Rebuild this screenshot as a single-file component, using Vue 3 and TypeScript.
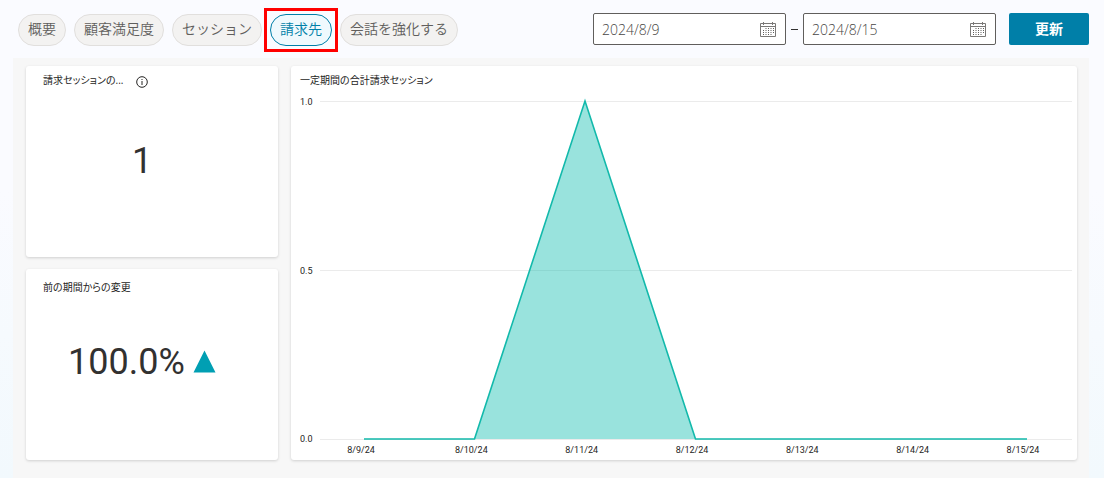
<script setup lang="ts">
import { computed, ref } from 'vue'

interface Tab {
  id: string
  label: string
}

interface Point {
  date: string
  value: number
}

const tabs: Tab[] = [
  { id: 'summary', label: '概要' },
  { id: 'csat', label: '顧客満足度' },
  { id: 'sessions', label: 'セッション' },
  { id: 'billing', label: '請求先' },
  { id: 'boost', label: '会話を強化する' },
]

const activeTab = ref('billing')
const startDate = ref('2024/8/9')
const endDate = ref('2024/8/15')

const points: Point[] = [
  { date: '8/9/24', value: 0 },
  { date: '8/10/24', value: 0 },
  { date: '8/11/24', value: 1 },
  { date: '8/12/24', value: 0 },
  { date: '8/13/24', value: 0 },
  { date: '8/14/24', value: 0 },
  { date: '8/15/24', value: 0 },
]

const yTicks = ['1.0', '0.5', '0.0']

const line = computed(() =>
  points.map((p, i) => `${(i * 600) / (points.length - 1)},${(1 - p.value) * 100}`).join(' '),
)
const area = computed(() => `0,100 ${line.value} 600,100`)

const dots: { x: number; y: number }[] = []
for (let row = 0; row < 4; row++) {
  for (let col = 0; col < 5; col++) {
    if ((row === 0 && col === 0) || (row === 3 && col === 4)) continue
    dots.push({ x: 3 + col * 2.5, y: 6 + row * 2 })
  }
}
</script>

<template>
  <div class="page">
    <header class="toolbar">
      <nav class="tabs" aria-label="レポート">
        <button
          v-for="tab in tabs"
          :key="tab.id"
          type="button"
          class="tab"
          :class="{ active: tab.id === activeTab }"
          :aria-pressed="tab.id === activeTab"
          @click="activeTab = tab.id"
        >
          {{ tab.label }}
        </button>
      </nav>

      <form class="range" @submit.prevent>
        <div class="date">
          <input v-model="startDate" type="text" aria-label="開始日" />
          <button type="button" class="picker" aria-label="開始日を選択">
            <svg width="16" height="15" viewBox="0 0 16 15" fill="none" stroke="#7a7876">
              <path d="M0.5 1.5h15v13h-15zM0.5 4.5h15M3.5 0v3M12.5 0v3" />
              <rect v-for="(d, i) in dots" :key="i" :x="d.x" :y="d.y" width="1" height="1" fill="#605e5c" stroke="none" />
            </svg>
          </button>
        </div>
        <span class="dash" aria-hidden="true"></span>
        <div class="date">
          <input v-model="endDate" type="text" aria-label="終了日" />
          <button type="button" class="picker" aria-label="終了日を選択">
            <svg width="16" height="15" viewBox="0 0 16 15" fill="none" stroke="#7a7876">
              <path d="M0.5 1.5h15v13h-15zM0.5 4.5h15M3.5 0v3M12.5 0v3" />
              <rect v-for="(d, i) in dots" :key="i" :x="d.x" :y="d.y" width="1" height="1" fill="#605e5c" stroke="none" />
            </svg>
          </button>
        </div>
        <button type="submit" class="update">更新</button>
      </form>
    </header>

    <main class="board">
      <section class="card kpi total">
        <h2 class="title">
          請求セッションの...
          <svg class="info" width="12" height="12" viewBox="0 0 12 12" fill="none" stroke="#252423">
            <circle cx="6" cy="6" r="5.3" />
            <path d="M6 5v4M6 3v1" />
          </svg>
        </h2>
        <p class="value">1</p>
      </section>

      <section class="card kpi change">
        <h2 class="title">前の期間からの変更</h2>
        <p class="value">
          100.0%
          <svg width="23" height="23" viewBox="0 0 23 23"><path d="M11.5 0.5L22.5 22.5H0.5z" fill="#009fb3" /></svg>
        </p>
      </section>

      <section class="card chart">
        <h2 class="title">一定期間の合計請求セッション</h2>
        <div class="graph">
          <div class="y-axis">
            <span v-for="t in yTicks" :key="t">{{ t }}</span>
          </div>
          <div class="plot">
            <div class="grid-lines"><i></i><i></i><i></i></div>
            <svg class="series" viewBox="0 0 600 100" preserveAspectRatio="none" aria-hidden="true">
              <polygon :points="area" fill="#01b8aa" fill-opacity="0.4" />
              <polyline :points="line" fill="none" stroke="#12b9ab" stroke-width="1.6" vector-effect="non-scaling-stroke" />
            </svg>
          </div>
          <div class="x-axis">
            <span v-for="p in points" :key="p.date">{{ p.date }}</span>
          </div>
        </div>
      </section>
    </main>
  </div>
</template>

<style>
body {
  margin: 0;
}
</style>

<style scoped>
.page {
  box-sizing: border-box;
  min-height: 100vh;
  display: flex;
  flex-direction: column;
  padding: 0 15px 0 13px;
  background: linear-gradient(180deg, #fafbff 0%, #fafbff 40%, #f2f9fd 100%);
  font-family: 'Open Sans', 'Noto Sans CJK JP', sans-serif;
  color: #252423;
}

button,
input {
  font: inherit;
  margin: 0;
}

.toolbar {
  display: flex;
  flex-wrap: wrap;
  justify-content: space-between;
  align-items: center;
  min-height: 58px;
}

.tabs {
  display: flex;
  gap: 8px;
  padding: 1px 0 0 5px;
}

.tab {
  position: relative;
  height: 32px;
  padding: 0 9px 2px;
  border: 1px solid #e1dfdd;
  border-radius: 16px;
  background: #f3f2f1;
  color: #605e5c;
  font-size: 14px;
  font-weight: 350;
  line-height: 20px;
  white-space: nowrap;
}

.tab.active {
  border-color: #007fa8;
  background: #eff9fd;
  color: #007fa8;
}

.tab.active::after {
  content: '';
  position: absolute;
  inset: -7px;
  border: 3px solid #ff0000;
  pointer-events: none;
}

.range {
  display: flex;
  align-items: center;
}

.date {
  box-sizing: border-box;
  display: flex;
  align-items: center;
  width: 193px;
  height: 32px;
  border: 1px solid #605e5c;
  border-radius: 2px;
  background: #fff;
}

.date input {
  flex: 1;
  min-width: 0;
  padding: 0 8px;
  border: 0;
  outline: 0;
  background: transparent;
  color: #484644;
  font-size: 14px;
  font-weight: 350;
}

.picker {
  display: flex;
  padding: 0 9px;
  border: 0;
  background: transparent;
}

.dash {
  width: 7px;
  height: 1px;
  margin: 0 5px;
  background: #323130;
}

.update {
  width: 80px;
  height: 32px;
  margin-left: 13px;
  padding: 0 0 2px;
  border: 0;
  border-radius: 2px;
  background: #007fa8;
  color: #fff;
  font-size: 14px;
  font-weight: 700;
}

.board {
  flex: 1;
  display: grid;
  grid-template-columns: 252px 1fr;
  grid-template-rows: 1fr 1fr;
  gap: 12px 13px;
  padding: 8px 12px 18px 13px;
  background: #f7f7f7;
}

.card {
  display: flex;
  flex-direction: column;
  min-height: 190px;
  border-radius: 3px;
  background: #fff;
  box-shadow: 0 1px 3px rgba(0, 0, 0, 0.16);
  box-sizing: border-box;
}

.title {
  box-sizing: border-box;
  display: flex;
  align-items: center;
  height: 28px;
  margin: 0;
  padding-bottom: 2px;
  font-size: 10px;
  font-weight: 400;
  font-feature-settings: 'palt' 1;
}

.info {
  margin: 6px 0 0 13px;
}

.kpi .title {
  padding-left: 17px;
}

.kpi.change .title {
  height: 36px;
}

.value {
  flex: 1;
  display: flex;
  align-items: center;
  justify-content: center;
  gap: 8px;
  margin: 0;
  padding: 0 20px 30px 0;
  color: #323130;
  font-family: Roboto, sans-serif;
  font-size: 36px;
  line-height: 44px;
}

.kpi.change .value {
  padding-bottom: 42px;
}

.chart {
  grid-column: 2;
  grid-row: 1 / span 2;
  padding: 0 5px 0 9px;
}

.graph {
  flex: 1;
  display: grid;
  grid-template-columns: 20px 1fr;
  grid-template-rows: 1fr 20px;
  padding-top: 7px;
  font-family: Roboto, sans-serif;
  font-size: 9px;
  line-height: 10px;
}

.y-axis {
  display: flex;
  flex-direction: column;
  justify-content: space-between;
  margin: -4px 0;
}

.plot {
  display: grid;
}

.grid-lines,
.series {
  grid-area: 1 / 1;
}

.grid-lines {
  display: flex;
  flex-direction: column;
  justify-content: space-between;
}

.grid-lines i {
  height: 1px;
  background: #ebebeb;
}

.series {
  width: calc(100% - 89px);
  height: calc(100% - 1px);
  min-height: 0;
  margin-left: 44px;
  overflow: visible;
}

.x-axis {
  grid-column: 2;
  display: flex;
  align-items: center;
  justify-content: space-between;
  padding: 0 29px 0 21px;
}

.x-axis span {
  width: 40px;
  text-align: center;
}
</style>
